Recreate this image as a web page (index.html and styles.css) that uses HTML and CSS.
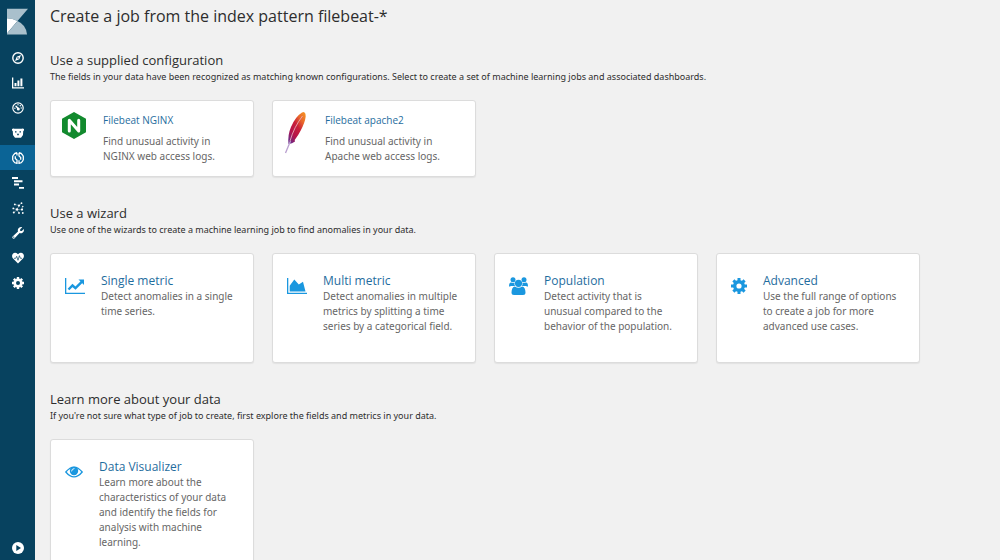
FILE: index.html
```html
<!DOCTYPE html>
<html lang="en">
<head>
<meta charset="utf-8">
<title>Create a job</title>
<link rel="stylesheet" href="styles.css">
</head>
<body>
<div class="app">
  <nav class="sidebar" aria-label="Main">
    <a class="logo" href="#" aria-label="Kibana">
      <svg width="22" height="28" viewBox="0 0 22 28"><path fill="#a9c0cc" d="M0 0h22L11 13Q6 10 0 10z"/><path fill="#fff" d="M0 10q6 0 11 3L0 26z"/><path fill="#a9c0cc" d="M11 13q9 4 10 14H0v-1z"/></svg>
    </a>
    <a class="nav-link" href="#" aria-label="Discover"><svg viewBox="0 0 12 12"><circle cx="6" cy="6" r="5.200" fill="none" stroke="#fff" stroke-width="1.400"/><path fill="#fff" fill-rule="evenodd" d="M9 3L7.300 7.300 3 9l1.700-4.300zM6 5.200a.8.8 0 1 0 0 1.600.8.8 0 0 0 0-1.600z"/></svg></a>
    <a class="nav-link" href="#" aria-label="Visualize"><svg viewBox="0 0 12 12"><path fill="#fff" d="M0 .5h1.300v9.700H12v1.300H0zM2.500 6h2v3.300h-2zM5.400 3.500h2v5.800h-2zM8.400 1.500h2v7.800h-2z"/></svg></a>
    <a class="nav-link" href="#" aria-label="Dashboard"><svg viewBox="0 0 12 12"><circle cx="6" cy="6" r="5.200" fill="none" stroke="#fff" stroke-width="1.200"/><path fill="none" stroke="#fff" stroke-width="1.500" stroke-linecap="round" d="M4 4.200l2.200 2.300"/><circle cx="6.300" cy="7" r="1.500" fill="#fff"/><g fill="#fff"><circle cx="6" cy="2.700" r=".7"/><circle cx="8.300" cy="3.800" r=".8"/><circle cx="9.200" cy="6" r=".7"/><circle cx="2.900" cy="6.300" r=".7"/></g></svg></a>
    <a class="nav-link" href="#" aria-label="Timelion"><svg viewBox="0 0 12 12"><path fill="#fff" fill-rule="evenodd" d="M0 2q1.200-1 2.500-.2h7Q10.800 1 12 2q.2 1.500-.8 2.200L11 8 9 10.800H3L1 8 .8 4.200Q-.2 3.500 0 2zM3 4.200v1.300h1.500V4.200zM7.500 4.200v1.300H9V4.200zM4.700 6.800L6 8.700l1.300-1.900z"/></svg></a>
    <a class="nav-link active" href="#" aria-current="page" aria-label="Machine Learning"><svg viewBox="0 0 12 12"><g fill="none" stroke="#fff" stroke-width="1.300"><path d="M5 .7Q2.600.9 1.300 3.200L.7 4.500v3.200l.8 1.500q1 1.900 3.500 2.100V8L3.300 6.500V4.300M7 .7q2.400.2 3.700 2.500l.6 1.300v3.200l-.8 1.500q-1 1.900-3.500 2.100V8.300M5 .7v2.800M7 .7V4l1.700 1.500v2.200"/></g></svg></a>
    <a class="nav-link" href="#" aria-label="APM"><svg viewBox="0 0 12 12"><path fill="#fff" d="M0 0h6v2H0zM2 3.300h8.500v1.900H2zM2 6.600h5v1.900H2zM7 9.900h5v1.900H7z"/></svg></a>
    <a class="nav-link" href="#" aria-label="Graph"><svg viewBox="0 0 12 12"><path fill="none" stroke="#9fb7c3" stroke-width=".6" d="M2 10.500l3-3 2-4 2-2M5 7.500l5 .3M1.500 6.500L5 7.500M7 3.500l-4-1M5 7.500L7 11M10 7.800l.3-3.300"/><g fill="#fff"><circle cx="5" cy="7.400" r="1.200"/><circle cx="7" cy="3.600" r="1.100"/><circle cx="9.500" cy="1.200" r=".9"/><circle cx="2.800" cy="2.400" r=".9"/><circle cx="1.300" cy="6.400" r=".9"/><circle cx="1.800" cy="10.600" r="1"/><circle cx="10" cy="7.600" r="1.100"/><circle cx="7" cy="11" r=".9"/><circle cx="10.800" cy="4.500" r=".7"/><circle cx="10.800" cy="11" r=".9"/></g></svg></a>
    <a class="nav-link" href="#" aria-label="Dev Tools"><svg viewBox="0 0 12 12"><path fill="#fff" fill-rule="evenodd" d="M10.300.3L8.200 2.300v1.600h1.600L11.800 2q.6 2.500-1.300 3.800-1.400.9-2.900.3L2.400 11.400Q1.500 12 .7 11.300q-.8-.9-.1-1.700L6 4.400Q5.300 2.500 6.800 1 8.300-.3 10.300.3zM1.800 9.600a.6.6 0 1 0 0 1.200.6.6 0 0 0 0-1.200z"/></svg></a>
    <a class="nav-link" href="#" aria-label="Monitoring"><svg viewBox="0 0 12 12"><path fill="#fff" d="M6 11.500L.8 6.300Q-.6 4 .7 2 3-.6 6 2.200 9-.6 11.300 2q1.300 2-.1 4.300z"/><path fill="none" stroke="#07425f" stroke-width=".7" d="M2 6.300h1.700L4.700 4.300l1.300 4 1.400-4.600 1 2.600H10"/></svg></a>
    <a class="nav-link" href="#" aria-label="Management"><svg viewBox="0 0 12 12"><circle cx="6" cy="6" r="3.300" fill="none" stroke="#fff" stroke-width="2.600"/><path stroke="#fff" stroke-width="2.400" d="M6 0v2.200M6 9.800V12M0 6h2.200M9.800 6H12M1.800 1.800l1.400 1.400M8.800 8.800l1.400 1.400M10.200 1.800L8.800 3.200M3.200 8.800l-1.400 1.400"/></svg></a>
    <a class="nav-link expand" href="#" aria-label="Expand"><svg viewBox="0 0 12 12"><circle cx="6" cy="6" r="6" fill="#fff"/><path fill="#07425f" d="M4.300 3l4.700 3-4.700 3z"/></svg></a>
  </nav>
  <main class="content">
    <h1 class="page-title">Create a job from the index pattern filebeat-*</h1>

    <section class="section">
      <h2 class="section-title">Use a supplied configuration</h2>
      <p class="section-text">The fields in your data have been recognized as matching known configurations. Select to create a set of machine learning jobs and associated dashboards.</p>
      <div class="cards">
        <a class="card recognized" href="#">
          <span class="card-icon"><svg width="24" height="27" viewBox="0 0 24 27"><path fill="#128a2e" d="M12 0l12 6.700v13.600L12 27 0 20.300V6.700z"/><path fill="none" stroke="#fff" stroke-width="3" stroke-linecap="round" stroke-linejoin="round" d="M7.300 19V8.300L16.700 19V8.300"/></svg></span>
          <span class="card-body"><span class="card-title">Filebeat NGINX</span><span class="card-text">Find unusual activity in NGINX web access logs.</span></span>
        </a>
        <a class="card recognized" href="#">
          <span class="card-icon"><svg width="24" height="42" viewBox="0 0 24 42"><defs><linearGradient id="feather" x1="1" y1="0" x2=".2" y2="1"><stop offset="0" stop-color="#f69923"/><stop offset=".28" stop-color="#e9672b"/><stop offset=".5" stop-color="#c9203a"/><stop offset=".78" stop-color="#b3124b"/><stop offset="1" stop-color="#6d2a86"/></linearGradient></defs><path fill="url(#feather)" d="M20 0q2 1 1.700 4.500-.7 6-5 14-2.500 5-6 9.500l.3 1.500-3 1.800-3.500.7Q3.500 23 7 15 11.500 4.500 18 .5z"/><path fill="none" stroke="#e9a9b7" stroke-width=".9" d="M18.500 4Q10 15 6 29"/><path fill="none" stroke="#b9a0cf" stroke-width="1.300" d="M6.500 29Q4 35 1.500 41"/></svg></span>
          <span class="card-body"><span class="card-title">Filebeat apache2</span><span class="card-text">Find unusual activity in Apache web access logs.</span></span>
        </a>
      </div>
    </section>

    <section class="section">
      <h2 class="section-title">Use a wizard</h2>
      <p class="section-text">Use one of the wizards to create a machine learning job to find anomalies in your data.</p>
      <div class="cards">
        <a class="card wizard" href="#">
          <span class="card-icon"><svg width="20" height="18" viewBox="0 0 20 18"><path fill="#1a97df" d="M0 1h1.300v14.700H20V17H0z"/><path fill="none" stroke="#1a97df" stroke-width="2.400" d="M3.500 12.500l4-4 3 2.700L17 4.700"/><path fill="#1a97df" d="M13.500 2.500H19V8z"/></svg></span>
          <span class="card-body"><span class="card-title">Single metric</span><span class="card-text">Detect anomalies in a single time series.</span></span>
        </a>
        <a class="card wizard" href="#">
          <span class="card-icon"><svg width="20" height="18" viewBox="0 0 20 18"><path fill="#1a97df" d="M0 1h1.300v14.700H20V17H0zM2.700 14.500V8.700L7.300 2.500l4.500 5L16 4.700l2.500 9.800z"/></svg></span>
          <span class="card-body"><span class="card-title">Multi metric</span><span class="card-text">Detect anomalies in multiple metrics by splitting a time series by a categorical field.</span></span>
        </a>
        <a class="card wizard" href="#">
          <span class="card-icon"><svg width="19" height="18" viewBox="0 0 19 18"><g fill="#1a97df"><circle cx="4" cy="2.700" r="2.500"/><circle cx="15" cy="2.700" r="2.500"/><path d="M0 9.500Q0 5.700 2 5.500q2 .9 3.600.1Q5 7.500 6 9H2Q.2 9.800 0 9.500zM19 9.500q0-3.800-2-4-2 .9-3.600.1Q14 7.500 13 9h4q1.800.8 2 .5z"/><circle cx="9.500" cy="6.300" r="3.600"/><path d="M2.500 15.500q.1-5.500 3.400-6.100 3.600 2.500 7.200 0 3.300.6 3.400 6.100 0 2.500-2.500 2.500H5q-2.500 0-2.500-2.500z"/></g></svg></span>
          <span class="card-body"><span class="card-title">Population</span><span class="card-text">Detect activity that is unusual compared to the behavior of the population.</span></span>
        </a>
        <a class="card wizard" href="#">
          <span class="card-icon"><svg width="16" height="18" viewBox="0 0 16 18"><circle cx="8" cy="9" r="4.300" fill="none" stroke="#1a97df" stroke-width="3.400"/><path stroke="#1a97df" stroke-width="3" d="M8 1v3M8 14v3M0 9h3M13 9h3M2.400 3.400l2 2M11.600 12.600l2 2M13.600 3.400l-2 2M4.400 12.600l-2 2"/></svg></span>
          <span class="card-body"><span class="card-title">Advanced</span><span class="card-text">Use the full range of options to create a job for more advanced use cases.</span></span>
        </a>
      </div>
    </section>

    <section class="section">
      <h2 class="section-title">Learn more about your data</h2>
      <p class="section-text">If you're not sure what type of job to create, first explore the fields and metrics in your data.</p>
      <div class="cards">
        <a class="card wizard" href="#">
          <span class="card-icon"><svg width="18" height="18" viewBox="0 0 18 18"><path fill="none" stroke="#1a97df" stroke-width="1.300" d="M.8 9Q9-.8 17.200 9 9 18.800.8 9z"/><circle cx="9" cy="8" r="4.200" fill="#1a97df"/><path fill="none" stroke="#fff" stroke-width=".9" stroke-linecap="round" d="M6.600 8Q6.700 5.800 9 5.600"/></svg></span>
          <span class="card-body"><span class="card-title">Data Visualizer</span><span class="card-text">Learn more about the characteristics of your data and identify the fields for analysis with machine learning.</span></span>
        </a>
      </div>
    </section>
  </main>
</div>
</body>
</html>
```
FILE: styles.css
```css
* {
  box-sizing: border-box;
}

body {
  margin: 0;
  background: #f1f1f1;
  color: #2d2d2d;
  font-family: "Open Sans", "Noto Sans", sans-serif;
}

.app {
  display: flex;
  height: 100vh;
}

.sidebar {
  display: flex;
  flex: none;
  flex-direction: column;
  width: 35px;
  background: #07425f;
}

.logo {
  display: flex;
  padding: 8px 7px 9px;
}

.nav-link {
  display: flex;
  align-items: center;
  justify-content: center;
  height: 25px;
}

.nav-link svg {
  display: block;
  width: 12px;
  height: 12px;
}

.nav-link.active {
  background: #0b6496;
}

.nav-link.expand {
  margin-top: auto;
}

.content {
  flex: 1;
  min-width: 0;
  padding: 4px 15px 16px;
  overflow-y: auto;
  scrollbar-width: none;
}

.page-title {
  margin: 0 0 22px;
  font-size: 16px;
  font-weight: 400;
  line-height: 24px;
}

.section {
  margin-bottom: 26px;
}

.section-title {
  margin: 0;
  font-size: 13px;
  font-weight: 400;
  line-height: 20px;
}

.section-text {
  margin: 0 0 16px;
  font-family: "Noto Sans", "Open Sans", sans-serif;
  font-size: 9px;
  line-height: 14px;
}

.cards {
  display: flex;
  flex-wrap: wrap;
  gap: 18px;
}

.card {
  display: flex;
  width: 204px;
  border: 1px solid #dcdcdc;
  border-radius: 3px;
  background: #fff;
  box-shadow: 0 1px 1px #e2e2e2;
  text-decoration: none;
}

.card-icon {
  flex: none;
}

.card-icon svg {
  display: block;
}

.card-title,
.card-text {
  display: block;
}

.card-title {
  color: #1f6d9e;
}

.card-text {
  color: #666;
  font-family: "Noto Sans", "Open Sans", sans-serif;
  font-size: 10px;
  line-height: 15px;
}

.recognized {
  gap: 17px;
  min-height: 77px;
  padding: 11px 24px 11px 11px;
}

.recognized .card-title {
  margin-bottom: 6px;
  font-size: 10px;
  line-height: 16px;
}

.wizard {
  gap: 16px;
  min-height: 110px;
  padding: 18px 17px 18px 14px;
}

.wizard .card-icon {
  padding-top: 5px;
}

.wizard .card-title {
  font-size: 12px;
  line-height: 17px;
}
```
